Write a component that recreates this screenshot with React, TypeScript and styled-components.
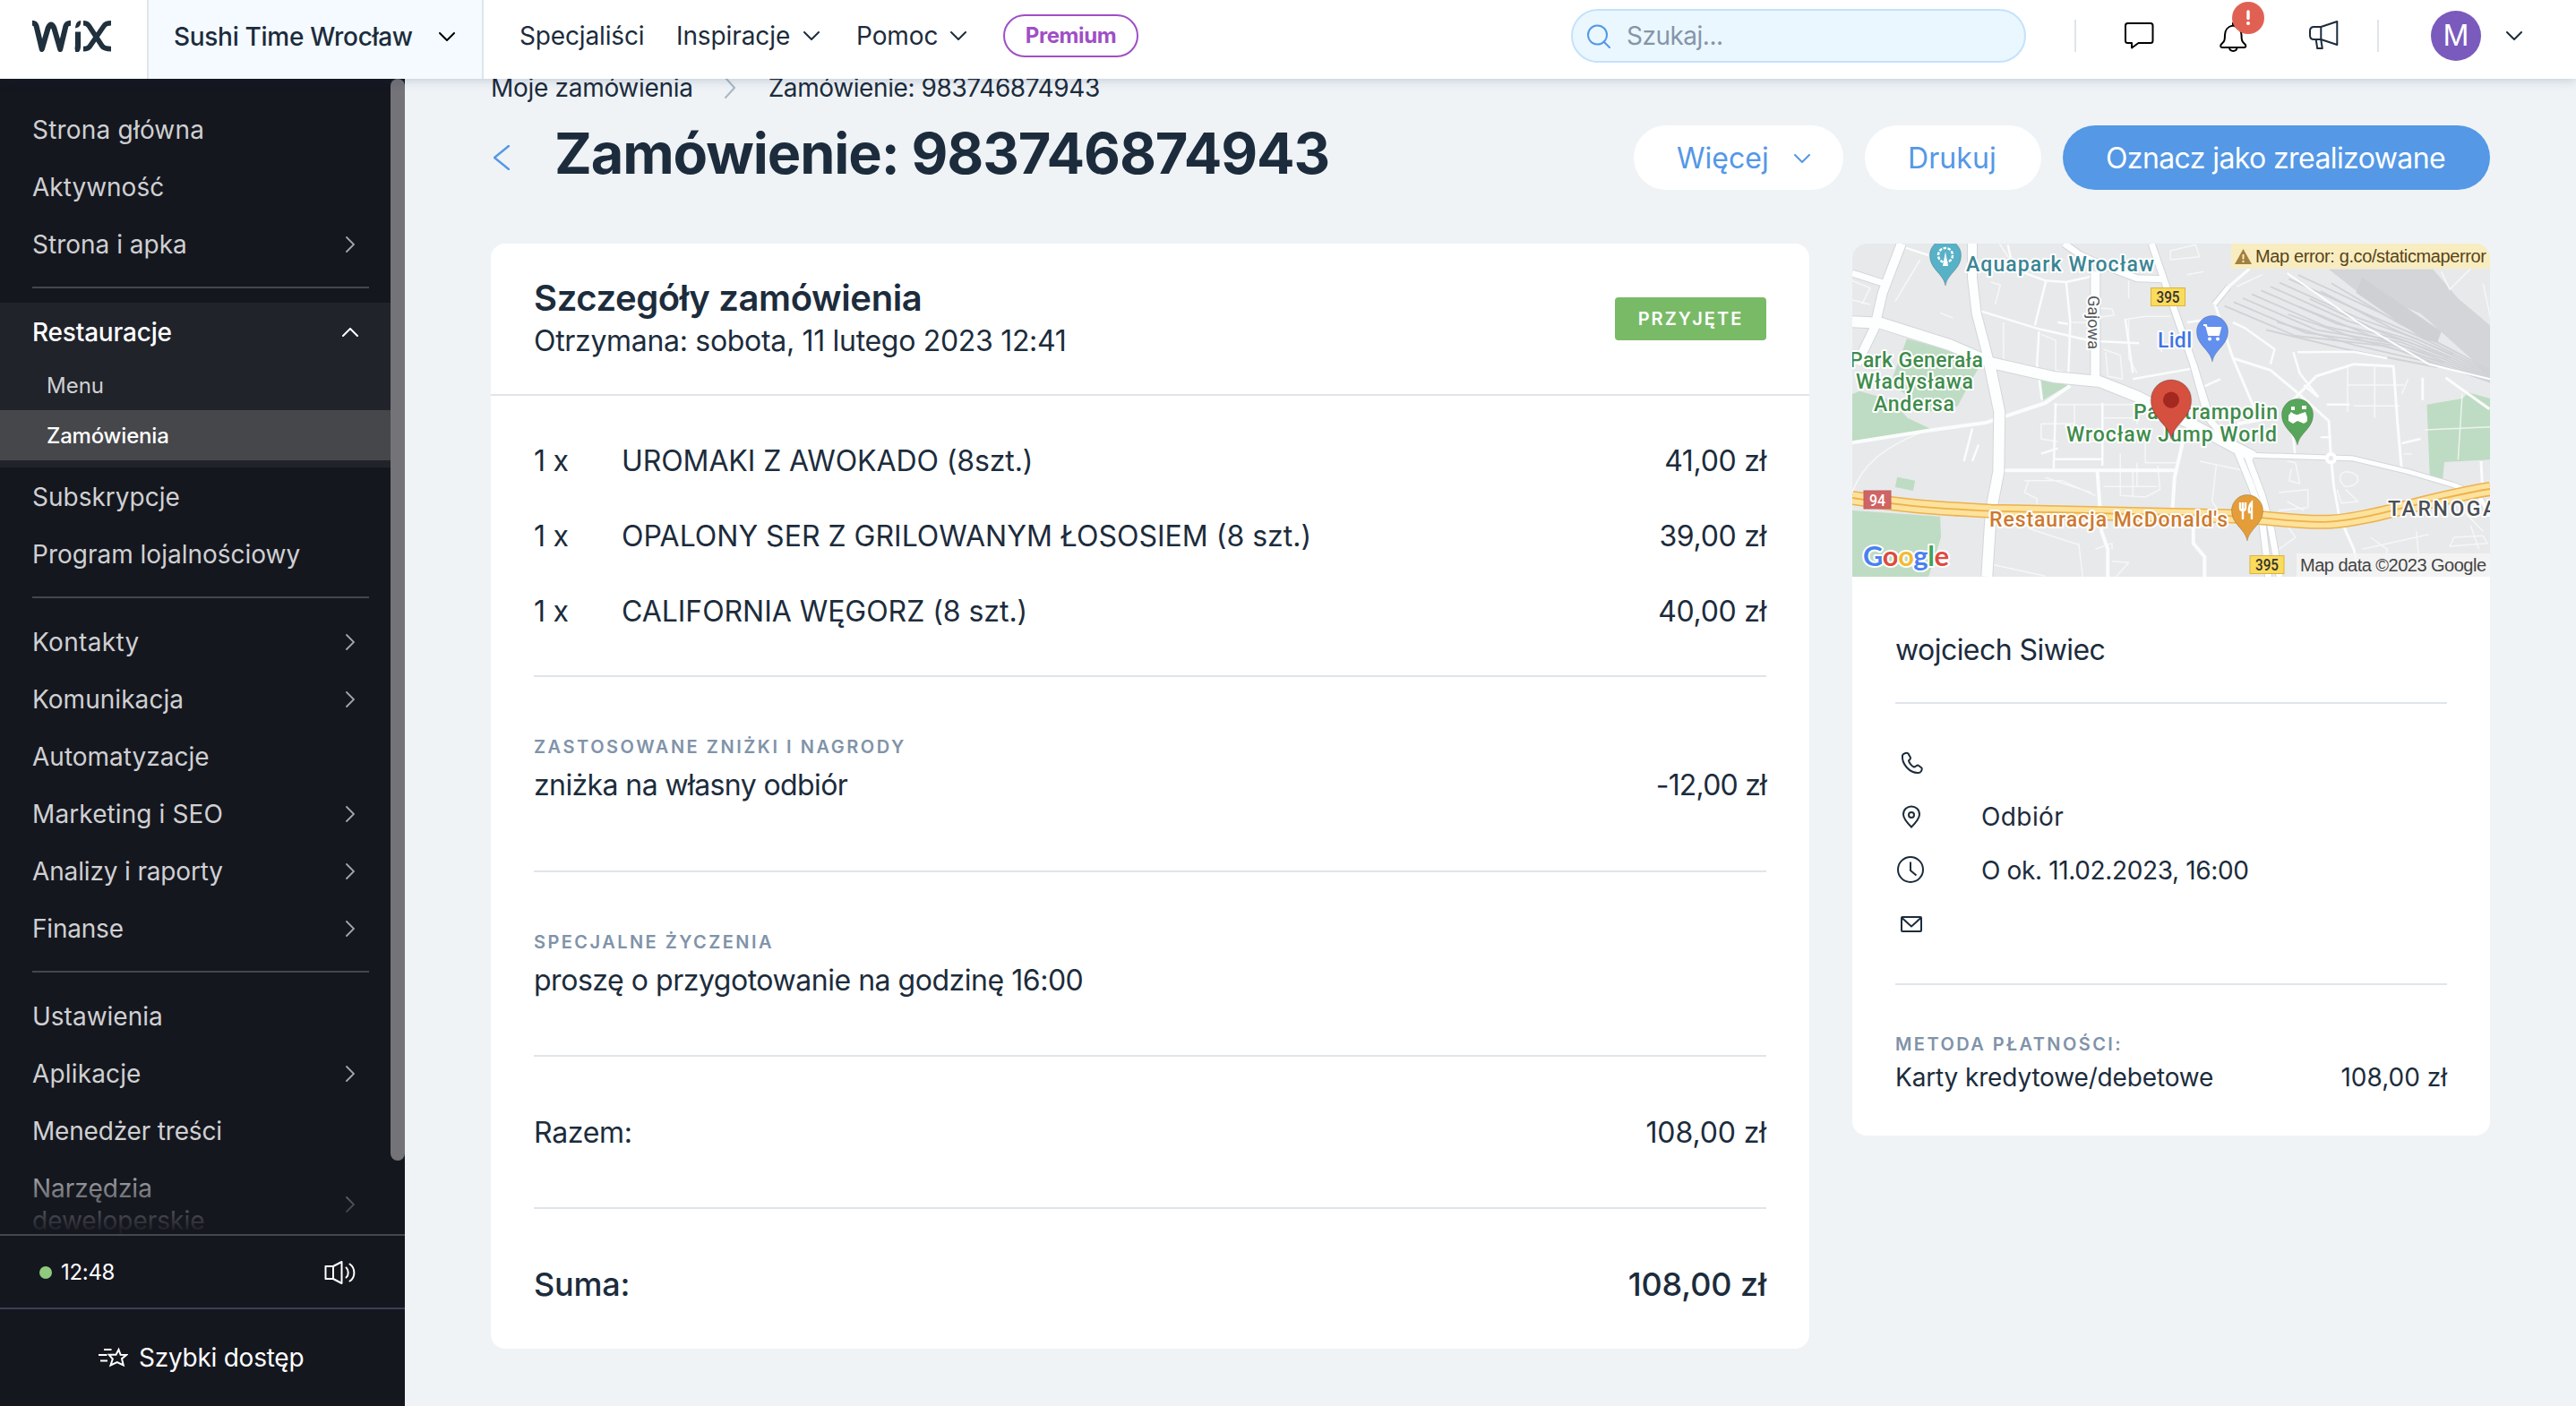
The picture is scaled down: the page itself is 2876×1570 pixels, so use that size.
import React from "react";
import styled, { createGlobalStyle, css } from "styled-components";

const ink = "#1c2c3c";
const line = "#dfe5eb";
const blue = "#5498e6";
const night = "#15171f";

const GlobalStyle = createGlobalStyle`
  *, *::before, *::after { box-sizing: border-box; }
  html, body { margin: 0; padding: 0; }
  body { font-family: Inter, "Liberation Sans", sans-serif; color: ${ink}; background: #eff3f6; overflow: hidden; }
  svg { display: block; flex: none; }
`;

const Page = styled.div`
  display: flex;
  flex-direction: column;
  width: 2876px;
  height: 1570px;
  overflow: hidden;
`;

const Txt = styled.span<{ $size?: number; $weight?: number; $ls?: number; $color?: string; $lh?: number }>`
  display: block;
  white-space: nowrap;
  font-size: ${(p) => p.$size ?? 28}px;
  font-weight: ${(p) => p.$weight ?? 400};
  letter-spacing: ${(p) => p.$ls ?? 0}px;
  line-height: ${(p) => p.$lh ?? 40}px;
  color: ${(p) => p.$color ?? "inherit"};
`;

/* ---------- header ---------- */

const Header = styled.header`
  position: relative;
  z-index: 2;
  display: flex;
  align-items: center;
  flex: none;
  height: 88px;
  background: #fff;
  box-shadow: 0 0 12px rgba(22, 45, 90, 0.25);
`;

const LogoCell = styled.div`
  display: flex;
  align-items: center;
  width: 164px;
  height: 88px;
  padding: 0 0 8px 36px;
`;

const SitePicker = styled.div`
  display: flex;
  align-items: center;
  justify-content: space-between;
  width: 376px;
  height: 88px;
  padding: 0 30px 7px 28px;
  border: solid ${line};
  border-width: 0 2px;
  background: #f4faff;
`;

const TopNav = styled.nav`
  display: flex;
  align-items: center;
  height: 88px;
  padding: 0 0 8px 40px;
`;

const TopLink = styled.div<{ $w: number }>`
  display: flex;
  align-items: center;
  justify-content: space-between;
  width: ${(p) => p.$w}px;
  padding-right: 41px;
`;

const PremiumPill = styled.button`
  display: flex;
  align-items: center;
  justify-content: center;
  width: 151px;
  height: 48px;
  padding: 0;
  border: 2px solid #9f4fc6;
  border-radius: 24px;
  background: #fff;
  font-family: inherit;
`;

const TopRight = styled.div`
  display: flex;
  align-items: center;
  height: 88px;
  margin-left: auto;
  padding: 0 60px 8px 0;
`;

const Search = styled.div`
  display: flex;
  align-items: center;
  gap: 18px;
  width: 508px;
  height: 60px;
  padding-left: 16px;
  border: 2px solid #c4e2fc;
  border-radius: 30px;
  background: #eaf7ff;
`;

const VRule = styled.i<{ $ml: number }>`
  width: 2px;
  height: 36px;
  margin-left: ${(p) => p.$ml}px;
  background: ${line};
`;

const IconSlot = styled.div<{ $ml: number }>`
  position: relative;
  width: 36px;
  height: 36px;
  margin-left: ${(p) => p.$ml}px;
`;

const AlertBadge = styled.span`
  position: absolute;
  top: -20px;
  left: 17px;
  display: flex;
  align-items: center;
  justify-content: center;
  width: 36px;
  height: 36px;
  border-radius: 50%;
  background: #e06154;
`;

const Avatar = styled.div`
  display: flex;
  align-items: center;
  justify-content: center;
  width: 56px;
  height: 56px;
  margin: 0 28px 0 58px;
  border-radius: 50%;
  background: #7a5abc;
`;

/* ---------- sidebar ---------- */

const Body = styled.div`
  display: flex;
  flex: 1;
  min-height: 0;
`;

const Sidebar = styled.aside`
  display: flex;
  flex-direction: column;
  flex: none;
  width: 452px;
  background: ${night};
`;

const NavScroll = styled.div`
  position: relative;
  height: 1290px;
  padding-top: 24px;
  overflow: hidden;
`;

const NavFade = styled.div`
  position: absolute;
  left: 0;
  right: 16px;
  bottom: 0;
  height: 84px;
  background: linear-gradient(rgba(21, 23, 31, 0), rgba(21, 23, 31, 0.96) 96%);
`;

const ScrollThumb = styled.div`
  position: absolute;
  top: 0;
  right: 0;
  width: 16px;
  height: 1208px;
  border-radius: 8px;
  background: #737378;
`;

const NavRow = styled.div<{ $tall?: boolean }>`
  display: flex;
  align-items: center;
  justify-content: space-between;
  height: ${(p) => (p.$tall ? 100 : 64)}px;
  padding: 1px 43px 0 36px;
`;

const NavRule = styled.hr`
  width: 376px;
  height: 2px;
  margin: 16px 0 16px 36px;
  border: 0;
  background: #46474b;
`;

const NavGroup = styled.div`
  padding-bottom: 8px;
  background: #20232a;
`;

const SubRow = styled.div<{ $active?: boolean }>`
  display: flex;
  align-items: center;
  height: 56px;
  padding: 1px 0 0 52px;
  ${(p) =>
    p.$active &&
    css`
      background: #46474b;
    `}
`;

const ArrowSlot = styled.span`
  display: flex;
  align-items: center;
  justify-content: center;
  width: 36px;
  height: 36px;
`;

const ClockBar = styled.div`
  display: flex;
  align-items: center;
  height: 84px;
  padding: 1px 54px 0 44px;
  border: solid #46474b;
  border-width: 2px 0;
  border-bottom-color: #3d3e55;
  color: #fff;
`;

const OnlineDot = styled.i`
  width: 14px;
  height: 14px;
  margin-right: 10px;
  border-radius: 50%;
  background: #8fca7e;
`;

const PushRight = styled.span`
  margin-left: auto;
`;

const QuickAccess = styled.div`
  display: flex;
  align-items: center;
  gap: 12px;
  height: 108px;
  padding-left: 110px;
  color: #fff;
`;

/* ---------- content ---------- */

const Content = styled.main`
  display: flex;
  flex-direction: column;
  flex: 1;
  padding: 0 96px;
`;

const Breadcrumbs = styled.div`
  display: flex;
  align-items: center;
  height: 20px;
`;

const CrumbArrow = styled.span`
  width: 84px;
  padding-left: 35px;
`;

const TitleRow = styled.div`
  display: flex;
  align-items: center;
  height: 72px;
  margin-top: 32px;
  padding-left: 3px;
`;

const TitleBox = styled.div`
  margin-left: 50px;
  padding-bottom: 11px;
`;

const Actions = styled.div`
  display: flex;
  gap: 24px;
  margin-left: auto;
`;

const ActionButton = styled.button<{ $w: number; $primary?: boolean; $pr?: number }>`
  display: flex;
  align-items: center;
  justify-content: space-between;
  width: ${(p) => p.$w}px;
  height: 72px;
  padding: 2px ${(p) => p.$pr ?? 40}px 0 48px;
  border: 0;
  border-radius: 36px;
  font-family: inherit;
  background: ${(p) => (p.$primary ? blue : "#fff")};
  color: ${(p) => (p.$primary ? "#fff" : blue)};
`;

const Columns = styled.div`
  display: flex;
  align-items: flex-start;
  gap: 48px;
  margin-top: 60px;
`;

const Card = styled.section<{ $w: number; $h: number }>`
  width: ${(p) => p.$w}px;
  height: ${(p) => p.$h}px;
  border-radius: 16px;
  background: #fff;
  overflow: hidden;
`;

const CardHead = styled.div`
  display: flex;
  align-items: center;
  justify-content: space-between;
  height: 170px;
  padding: 0 48px;
  border-bottom: 2px solid ${line};
`;

const HeadText = styled.div`
  padding-top: 2px;
`;

const StatusTag = styled.div`
  display: flex;
  align-items: center;
  justify-content: center;
  width: 169px;
  height: 48px;
  border-radius: 4px;
  background: #79ba67;
`;

const Section = styled.div<{ $h: number; $top?: number; $last?: boolean }>`
  height: ${(p) => p.$h}px;
  margin: 0 48px;
  padding-top: ${(p) => p.$top ?? 0}px;
  border-bottom: ${(p) => (p.$last ? "0" : `2px solid ${line}`)};
`;

const ItemRow = styled.div`
  display: grid;
  grid-template-columns: 98px 1fr auto;
  align-items: center;
  height: 84px;
`;

const SplitRow = styled.div<{ $mt?: number }>`
  display: flex;
  align-items: center;
  justify-content: space-between;
  height: 40px;
  margin-top: ${(p) => p.$mt ?? 0}px;
`;

const ContactRow = styled.div`
  display: grid;
  grid-template-columns: 96px 1fr;
  align-items: center;
  height: 60px;
`;

/* ---------- icons ---------- */

const Chevron = ({ dir, size = 18, depth = 10, color = ink, sw = 2 }: { dir: "down" | "up" | "left" | "right"; size?: number; depth?: number; color?: string; sw?: number }) => {
  const s = size;
  const d = depth;
  const vertical = dir === "down" || dir === "up";
  const path = {
    down: `M1 1L${s / 2} ${d - 1}L${s - 1} 1`,
    up: `M1 ${d - 1}L${s / 2} 1L${s - 1} ${d - 1}`,
    left: `M${d - 1} 1L1 ${s / 2}L${d - 1} ${s - 1}`,
    right: `M1 1L${d - 1} ${s / 2}L1 ${s - 1}`,
  }[dir];
  return (
    <svg width={vertical ? s : d} height={vertical ? d : s} fill="none" stroke={color} strokeWidth={sw} strokeLinecap="round">
      <path d={path} />
    </svg>
  );
};

const WixLogo = () => (
  <svg width="90" height="36" viewBox="0 0 90 36" fill="none" stroke="#20303c" strokeWidth="6" strokeLinejoin="round">
    <path d="M0 3.800C3.200 3.800 4 5 4.700 7.600L10.800 33L17.600 9.500Q21 1.500 24.400 9.500L31.200 33L37.300 7.600C38 5 39.200 3.800 43 3.800" />
    <path d="M51 13.500V29Q51 34 48 34.500" strokeWidth="6.200" strokeLinejoin="miter" />
    <path d="M48 9.500C48.400 4.500 50 1.500 54.200 1C54.400 6 53 8.500 48 9.500Z" fill="#20303c" stroke="none" />
    <path d="M57 3.800C60.600 3.800 62 4.800 63.400 7L78 29.400C79.400 31.500 82.500 32.600 88 32.600M88 3.800C82.800 3.800 81.400 4.800 80 7L64.200 29.800C62.700 32 61 32.600 57 32.600" strokeWidth="5.600" />
  </svg>
);

const SearchIcon = () => (
  <svg width="26" height="27" viewBox="0 0 26 27" fill="none" stroke={blue} strokeWidth="2" strokeLinecap="round">
    <circle cx="11.500" cy="12" r="10.500" />
    <path d="M18.500 19.500L25 26" />
  </svg>
);

const ChatIcon = () => (
  <svg width="36" height="36" viewBox="0 0 36 36" fill="none" stroke="#000" strokeWidth="2" strokeLinejoin="round">
    <path d="M5.500 4H31Q33.500 4 33.500 6.500V23.500Q33.500 26 31 26H17.500L10 31.500V26H5.500Q3 26 3 23.500V6.500Q3 4 5.500 4Z" />
  </svg>
);

const BellIcon = () => (
  <svg width="36" height="38" viewBox="0 0 36 38" fill="none" stroke="#000" strokeWidth="2" strokeLinejoin="round">
    <path d="M18 3V6.500C12 7.500 9 12 9 17C9 24 8 24.500 5.800 26.500C3.500 28.500 3.800 31 5.800 31H30.500C32.800 31 33 28.500 30.600 26.500C28.500 24.500 27.500 24 27.500 17C27.500 12 24 7.500 18 6.500" />
    <path d="M14 31.500C14.500 36 22 36 22.500 31.500" />
  </svg>
);

const MegaphoneIcon = () => (
  <svg width="36" height="36" viewBox="0 0 36 36" fill="none" stroke={ink} strokeWidth="2" strokeLinejoin="round">
    <path d="M15.300 8H7.500Q3 8 3 12.500V17.500Q3 22 7.500 22H15.300ZM15.300 8L33.300 2V28L15.300 22M9.700 22L11.200 32H16.800L15.200 22" />
  </svg>
);

const SpeakerIcon = () => (
  <svg width="36" height="28" viewBox="0 0 36 28" fill="none" stroke="#fff" strokeWidth="2" strokeLinejoin="round" strokeLinecap="round">
    <path d="M10 7L19.500 2V26L10 21H1.500V7ZM10 7V21" />
    <path d="M24.500 8.500C27.500 11 27.500 17 24.500 19.500M28.500 4.500C35 9 35 19.500 28.500 23.500" />
  </svg>
);

const FastStarIcon = () => (
  <svg width="33" height="24" viewBox="0 0 33 24" fill="none" stroke="#fff" strokeWidth="2" strokeLinejoin="miter">
    <path d="M22.500 3L24.600 8.800L31 9L26 13.200L27.800 20.500L20.800 17L13.500 20.500L15.800 13.500L11.800 8.800H19.500Z" />
    <path d="M6 3H14.500M0 9H9.500M2 15.500H10" />
  </svg>
);

const PhoneIcon = () => (
  <svg width="36" height="36" viewBox="0 0 36 36" fill="none" stroke={ink} strokeWidth="2" strokeLinejoin="round">
    <path d="M8 9.500C7 19 16 29.500 26 29C28.500 28.800 30.500 25.500 29.500 23.500L25.500 20.500C24 20 22.500 22.500 21 22.500C18.500 21.500 15.500 18 15 15.500C15.500 14.500 17.500 13.500 17 12L14.500 7.500C12.500 6 8.500 7.500 8 9.500Z" />
  </svg>
);

const PinIcon = () => (
  <svg width="36" height="36" viewBox="0 0 36 36" fill="none" stroke={ink} strokeWidth="2">
    <path d="M18 29.500C13 24.500 9 20 9 15.500C9 3.500 27 3.500 27 15.500C27 20 23 24.500 18 29.500Z" />
    <circle cx="18" cy="16" r="3" />
  </svg>
);

const ClockIcon = () => (
  <svg width="36" height="36" viewBox="0 0 36 36" fill="none" stroke={ink} strokeWidth="2">
    <circle cx="17" cy="17" r="14" />
    <path d="M17 8.500V18L23.500 23.500" />
  </svg>
);

const MailIcon = () => (
  <svg width="36" height="36" viewBox="0 0 36 36" fill="none" stroke={ink} strokeWidth="2" strokeLinejoin="round">
    <rect x="7" y="10" width="22" height="16" rx="1" />
    <path d="M7.500 11L18 20.500L28.500 11" />
  </svg>
);

/* ---------- map ---------- */

const MapSvg = styled.svg`
  width: 712px;
  height: 372px;
  background: #e8e9eb;

  .halo {
    font-family: Roboto, sans-serif;
    font-size: 23px;
    font-weight: 500;
    paint-order: stroke;
    stroke: #fff;
    stroke-width: 4px;
    stroke-linejoin: round;
  }
  .light {
    font-weight: 400;
  }
  .shield {
    font-family: Roboto, sans-serif;
    font-size: 18px;
    font-weight: 500;
  }
  .note {
    font-family: "Liberation Sans", Arial, sans-serif;
    font-size: 20px;
  }
`;

type Road = [width: number, d: string];

const thinRoads: Road[] = [
  [1.5, "M370 36L400 100M350 165L372 175L360 240M228 268L258 285M230 370L262 385M120 230L180 90M17 225L60 240M17 160L60 185L40 240"],
  [1.5, "M380 300V440L460 455M470 340L505 360V460L535 470M620 390L660 410L665 490L630 480L625 400M545 300H590M590 250L640 255L645 275L600 285"],
  [1.5, "M500 575H700M550 575V700H620M470 640H550M470 640V690L510 700M700 580V640M720 700V770H800M770 700H810M620 620H690"],
  [1.5, "M430 830H520L600 880M440 830L430 870L460 890V910M480 820L590 870M660 740V880L720 885L755 860L750 780M700 770V850M620 850H750M690 800V885"],
  [1.5, "M17 870C40 780 90 720 180 670M350 1110L480 1150M560 1040L570 1152M440 990L560 1045M600 1060L640 1040V1060M640 1100L680 1105L650 1152"],
  [1.5, "M850 765L970 800M890 780L880 900L905 950M1070 790L1065 830L1090 840L1080 770L1060 765M1040 870L1110 860V920L1040 930M1060 900L1100 930"],
  [1.5, "M1200 800C1240 800 1240 850 1200 850C1180 830 1185 805 1200 800M1200 860L1230 900L1190 905L1180 860M1060 980L1080 1020L1040 1060L1030 1140"],
  [1.5, "M1260 1020L1300 1060L1290 1152M1370 1000L1380 1152M1460 1020L1530 1015L1540 1040L1450 1050L1460 1020M1240 1060L1400 1010M1500 980L1520 1060"],
  [1.5, "M1205 450V600M1270 450V620M1205 510H1340M1220 580H1330M1390 660L1547 650M1480 540L1470 760M1350 490L1335 540M1340 740L1360 740M1440 870L1530 1000"],
  [1.5, "M780 60L840 40L850 80L780 90ZM670 290L720 280H780M680 290V420L700 470M750 370L760 400M680 160V220M820 140L860 130M940 180L1000 140M1430 130L1450 190L1500 120M1530 170L1547 280"],
  [2.5, "M145 50L200 75M375 105L480 160L530 165L595 145M390 40L400 100M320 260L460 320L590 362L705 370M455 310L482 160M530 165L540 300L535 490M465 330L460 440L472 560M510 300L535 305"],
  [2.5, "M690 490L830 455M690 470L672 290M860 515L900 490M820 300L870 290M930 300L960 320L1030 390L1020 440M1075 400L1090 470L1135 550M1085 400L1220 398L1300 420"],
  [2.5, "M470 740L510 722M285 765L305 655M305 765L320 710M500 758H618M505 570L500 790M617 570V780M1155 575H1210M1140 685H1165M1335 705L1380 690M1080 755L1075 690L1060 600"],
  [3, "M970 120L920 180L887 240L930 420L985 600M930 420L1020 460L1080 530L1160 630L1165 750L1172 850L1185 950L1220 1060L1235 1152"],
  [3, "M1060 580L1130 480L1220 440L1315 447L1325 640L1335 800M1440 485L1545 590M1100 510L1135 550M1385 485V560M1525 765L1530 900"],
  [4, "M17 703L200 662L340 635L480 570L540 512M380 796H790M810 700L790 820L785 930M605 800L615 1000L630 1060V1152M835 980V1040L862 1085V1152M940 640L1000 625"],
];

const mainRoads: Road[] = [
  [5, "M975 745L1215 755L1350 800L1460 845L1520 880L1547 950M885 240L920 180"],
  [7, "M17 135L95 170M525 36L565 75L620 110L700 152L765 155M735 36L790 260L835 440L880 640"],
  [10, "M600 130V490M135 36L90 200L70 320L28 440M305 36V150L315 270L345 430"],
  [12, "M345 430L370 600L368 800L350 930L340 1152M17 298L85 302L250 375L350 435L500 483L610 498L700 548L850 655L930 715L980 750"],
  [7, "M835 440L870 620L940 730L975 850L998 940L1010 1080L1015 1152M965 750L1000 880L1020 980L1042 1152"],
];

const highway = "M17 888C120 912 200 922 350 932C560 936 760 944 960 950C1040 958 1090 972 1160 968C1260 962 1400 890 1547 858";

const MapPin = ({ x, y, color, scale = 1, children }: { x: number; y: number; color: string; scale?: number; children?: React.ReactNode }) => (
  <g transform={`translate(${x} ${y}) scale(${scale})`}>
    <path d="M0 0C-2.500-14-17.500-18-17.500-34A17.500 17.500 0 0 1 17.500-34C17.500-18 2.500-14 0 0Z" fill={color} stroke="rgba(0,0,0,.18)" />
    <g transform="translate(0 -34)">{children}</g>
  </g>
);

const Shield = ({ x, y, w, text, red }: { x: number; y: number; w: number; text: string; red?: boolean }) => (
  <g>
    <rect x={x} y={y} width={w} height="20" fill={red ? "#d06464" : "#fbdb5c"} stroke={red ? "#c05c5c" : "#d8b63c"} />
    <text className="shield" x={x + w / 2} y={y + 16.5} textAnchor="middle" fill={red ? "#fff" : "#333"} textLength={w - 12} lengthAdjust="spacingAndGlyphs">
      {text}
    </text>
  </g>
);

const StaticMap = () => (
  <MapSvg viewBox="0 0 712 372">
    <g transform="translate(-8 -12) scale(.46556 .33333)" fill="none" strokeLinejoin="round">
      <g fill="#bedcc3">
        <path d="M148 355L240 390L330 430L300 500L270 580L200 600L160 560L110 500ZM35 530L110 560L150 620L210 660L17 697V540Z" />
        <path d="M470 490L535 510L475 560ZM17 930L228 950L230 1020L200 1152H17ZM125 818L168 830L163 864L120 852Z" />
        <path d="M1395 575L1480 555L1495 535L1547 555V760L1437 768L1433 825L1402 815Z" />
      </g>
      <path d="M1160 122H1410L1470 220L1547 310V490L1500 420L1380 270L1300 225L1240 210Z" fill="#d4d5d8" />
      <g stroke="#d0d2d5" strokeWidth="1.800">
        {Array.from({ length: 9 }, (_, i) => (
          <path key={i} vectorEffect="non-scaling-stroke" d={`M${910 + i * 22} ${245 - i * 13}L${1080 + i * 25} ${345 - i * 10}L${1300 + i * 12} ${380 - i * 4}L1547 ${500 - i * 5}`} />
        ))}
        {Array.from({ length: 7 }, (_, i) => (
          <path key={i} vectorEffect="non-scaling-stroke" d={`M${1010 + i * 26} ${325 - i * 26}L${1200 + i * 22} ${390 - i * 14}L${1420 + i * 8} ${450 - i * 8}`} />
        ))}
      </g>
      <path d="M1240 150L1430 330L1420 368L1385 355L1225 200Z" fill="#cfd0d4" />
      <path d="M1060 135L1230 300L1400 440L1547 490" stroke="#fff" strokeWidth="2" vectorEffect="non-scaling-stroke" />
      {thinRoads.map(([w, d]) => (
        <path key={d} d={d} stroke="#fbfcfc" strokeWidth={w} opacity={w < 2 ? 0.75 : 1} vectorEffect="non-scaling-stroke" />
      ))}
      {mainRoads.map(([w, d]) => (
        <path key={d} d={d} stroke="#d3d6da" strokeWidth={w + 2} vectorEffect="non-scaling-stroke" />
      ))}
      {mainRoads.map(([w, d]) => (
        <path key={d} d={d} stroke="#fdfefe" strokeWidth={w} vectorEffect="non-scaling-stroke" />
      ))}
      <ellipse cx="1165" cy="755" rx="10" ry="14" fill="#e8e9eb" stroke="#fff" strokeWidth="4" vectorEffect="non-scaling-stroke" />
      <path d={highway} stroke="#edb14a" strokeWidth="16" vectorEffect="non-scaling-stroke" />
      <path d={highway} stroke="#fce29c" strokeWidth="13" vectorEffect="non-scaling-stroke" />
      <path d={highway} stroke="#edb14a" strokeWidth="1.800" vectorEffect="non-scaling-stroke" />
    </g>

    <MapPin x={104} y={47} color="#57b1c7">
      <circle r="8" fill="none" stroke="#fff" strokeWidth="2.500" strokeDasharray="3.500 1.500" />
      <path d="M0-4L3 12H-3Z" fill="#fff" />
    </MapPin>
    <text className="halo" x="127" y="30.500" textLength="210" fill="#3a8594">Aquapark Wrocław</text>
    <text className="halo light" transform="translate(262.500 58) rotate(90)" textLength="60" fill="#55595e" style={{ fontSize: 18.5 }}>Gajowa</text>
    <Shield x={333.5} y={49.5} w={38} text="395" />
    <text className="halo" x="341" y="116" textLength="38" fill="#4174e4">Lidl</text>
    <MapPin x={402} y={132} color="#6390ee">
      <path d="M-10-7H-7L-4 4H7L9-4H-6" fill="#fff" stroke="#fff" strokeWidth="2" />
      <circle cx="-3" cy="8.500" r="2" fill="#fff" />
      <circle cx="6" cy="8.500" r="2" fill="#fff" />
    </MapPin>
    <text className="halo" x="-3" y="137.500" textLength="149" fill="#3f8c4c">Park Generała</text>
    <text className="halo" x="4" y="162" textLength="131" fill="#3f8c4c">Władysława</text>
    <text className="halo" x="24" y="187" textLength="90" fill="#3f8c4c">Andersa</text>
    <text className="halo" x="314" y="196" textLength="161" fill="#3f8c4c">Park trampolin</text>
    <text className="halo" x="239" y="221" textLength="235" fill="#3f8c4c">Wrocław Jump World</text>
    <MapPin x={497} y={225} color="#57a65b">
      <path d="M-10 7V1L-7-3Q-2 2 3-1L9-3L11 3V7Q8 11 5 9L0 7L-5 10ZM-7-9H-3V-5H-7ZM5-10H10V-6H5Z" fill="#fff" />
    </MapPin>
    <MapPin x={356} y={218.5} color="#d6503f" scale={1.29}>
      <circle r="7" fill="#a3281f" />
    </MapPin>
    <text className="halo" x="153" y="316" textLength="266" fill="#cd792f">Restauracja McDonald's</text>
    <MapPin x={441} y={332} color="#e49d38">
      <path d="M-8-9V-3Q-8 0-5 0V10M-5-9V0M-2-9V-3Q-2 0-5 0M5 10V-9Q1-5 2 2H5" fill="none" stroke="#fff" strokeWidth="2.400" />
    </MapPin>
    <Shield x={13} y={276} w={30} text="94" red />
    <Shield x={444} y={348.5} w={38} text="395" />
    <text className="halo" x="598" y="304" fill="#4b4f55" letterSpacing="2.6">TARNOGA</text>

    <rect x="423" width="289" height="28" fill="#f8edc1" />
    <path d="M436.500 6L446 23H427Z" fill="#a3803f" />
    <path d="M436.500 12V17.500M436.500 19V21" stroke="#f8edc1" strokeWidth="2" />
    <text className="note" x="450" y="21" textLength="258" fill="#594417">Map error: g.co/staticmaperror</text>

    <rect x="496" y="346" width="216" height="26" fill="#f5f5f5" fillOpacity=".85" />
    <text className="note" x="500" y="366" textLength="208" fill="#444">Map data ©2023 Google</text>

    <text className="halo" x="12" y="360" textLength="96" style={{ fontFamily: "Lato", fontSize: 31, fontWeight: 700 }}>
      <tspan fill="#4a80ee">G</tspan>
      <tspan fill="#dd4b3e">o</tspan>
      <tspan fill="#f2bb33">o</tspan>
      <tspan fill="#4a80ee">g</tspan>
      <tspan fill="#41a35a">l</tspan>
      <tspan fill="#dd4b3e">e</tspan>
    </text>
  </MapSvg>
);

/* ---------- data ---------- */

type NavEntry = { label: string; arrow?: boolean; ls?: number };

const navTop: NavEntry[] = [
  { label: "Strona główna", ls: 0.2 },
  { label: "Aktywność" },
  { label: "Strona i apka", arrow: true },
];
const navPlans: NavEntry[] = [{ label: "Subskrypcje" }, { label: "Program lojalnościowy" }];
const navMiddle: NavEntry[] = [
  { label: "Kontakty", arrow: true, ls: 0.35 },
  { label: "Komunikacja", arrow: true, ls: 0.05 },
  { label: "Automatyzacje" },
  { label: "Marketing i SEO", arrow: true, ls: 0.1 },
  { label: "Analizy i raporty", arrow: true, ls: -0.15 },
  { label: "Finanse", arrow: true, ls: -0.2 },
];
const navBottom: NavEntry[] = [
  { label: "Ustawienia" },
  { label: "Aplikacje", arrow: true, ls: 0.15 },
  { label: "Menedżer treści", ls: -0.18 },
];

const items = [
  { name: "UROMAKI Z AWOKADO (8szt.)", price: "41,00 zł", ls: -0.1 },
  { name: "OPALONY SER Z GRILOWANYM ŁOSOSIEM (8 szt.)", price: "39,00 zł", ls: 0 },
  { name: "CALIFORNIA WĘGORZ (8 szt.)", price: "40,00 zł", ls: -0.05 },
];

const grey = "#cfd0d2";

const NavList = ({ entries }: { entries: NavEntry[] }) => (
  <>
    {entries.map((e) => (
      <NavRow key={e.label}>
        <Txt $ls={e.ls} $color={grey}>{e.label}</Txt>
        {e.arrow && (
          <ArrowSlot>
            <Chevron dir="right" size={18} depth={10} color="#a5a6aa" sw={1.8} />
          </ArrowSlot>
        )}
      </NavRow>
    ))}
  </>
);

export default function App() {
  return (
    <Page>
      <GlobalStyle />
      <Header>
        <LogoCell>
          <WixLogo />
        </LogoCell>
        <SitePicker>
          <Txt $weight={500} $ls={-0.3}>Sushi Time Wrocław</Txt>
          <Chevron dir="down" color="#000" />
        </SitePicker>
        <TopNav>
          <TopLink $w={175}><Txt $ls={-0.15}>Specjaliści</Txt></TopLink>
          <TopLink $w={201}><Txt $ls={-0.1}>Inspiracje</Txt><Chevron dir="down" /></TopLink>
          <TopLink $w={164}><Txt $ls={-0.1}>Pomoc</Txt><Chevron dir="down" /></TopLink>
          <PremiumPill><Txt $size={24} $weight={700} $ls={-0.4} $color="#9f4fc6">Premium</Txt></PremiumPill>
        </TopNav>
        <TopRight>
          <Search>
            <SearchIcon />
            <Txt $ls={-0.5} $color="#8595a8">Szukaj...</Txt>
          </Search>
          <VRule $ml={54} />
          <IconSlot $ml={52}><ChatIcon /></IconSlot>
          <IconSlot $ml={69}>
            <BellIcon />
            <AlertBadge>
              <svg width="6" height="18" viewBox="0 0 6 18"><path d="M3 2V9.500" stroke="#fff" strokeWidth="3.400" strokeLinecap="round" /><circle cx="3" cy="15" r="2" fill="#fff" /></svg>
            </AlertBadge>
          </IconSlot>
          <IconSlot $ml={65}><MegaphoneIcon /></IconSlot>
          <VRule $ml={42} />
          <Avatar><Txt $size={32} $color="#fff">M</Txt></Avatar>
          <Chevron dir="down" />
        </TopRight>
      </Header>

      <Body>
        <Sidebar>
          <NavScroll>
            <NavList entries={navTop} />
            <NavRule />
            <NavGroup>
              <NavRow>
                <Txt $weight={500} $ls={-0.2} $color="#fff">Restauracje</Txt>
                <ArrowSlot><Chevron dir="up" color="#fff" /></ArrowSlot>
              </NavRow>
              <SubRow><Txt $size={24} $color={grey}>Menu</Txt></SubRow>
              <SubRow $active><Txt $size={24} $weight={500} $ls={-0.2} $color="#fff">Zamówienia</Txt></SubRow>
            </NavGroup>
            <NavList entries={navPlans} />
            <NavRule />
            <NavList entries={navMiddle} />
            <NavRule />
            <NavList entries={navBottom} />
            <NavRow $tall>
              <Txt $lh={36} $color={grey}>Narzędzia<br />deweloperskie</Txt>
              <ArrowSlot><Chevron dir="right" size={18} depth={10} color="#a5a6aa" sw={1.8} /></ArrowSlot>
            </NavRow>
            <NavFade />
            <ScrollThumb />
          </NavScroll>
          <ClockBar>
            <OnlineDot />
            <Txt $size={24} $ls={-0.3}>12:48</Txt>
            <PushRight><SpeakerIcon /></PushRight>
          </ClockBar>
          <QuickAccess>
            <FastStarIcon />
            <Txt $ls={-0.25}>Szybki dostęp</Txt>
          </QuickAccess>
        </Sidebar>

        <Content>
          <Breadcrumbs>
            <Txt $lh={20} $ls={-0.3}>Moje zamówienia</Txt>
            <CrumbArrow><Chevron dir="right" size={24} depth={12} color="#a9b8c6" /></CrumbArrow>
            <Txt $lh={20} $ls={-0.4}>Zamówienie: 983746874943</Txt>
          </Breadcrumbs>
          <TitleRow>
            <Chevron dir="left" size={28} depth={18} color={blue} sw={2.4} />
            <TitleBox><Txt $size={63} $weight={700} $ls={-1.1} $lh={60}>Zamówienie: 983746874943</Txt></TitleBox>
            <Actions>
              <ActionButton $w={234} $pr={37}><Txt $size={32}>Więcej</Txt><Chevron dir="down" color={blue} /></ActionButton>
              <ActionButton $w={197}><Txt $size={32} $ls={0.1}>Drukuj</Txt></ActionButton>
              <ActionButton $w={477} $primary><Txt $size={32} $ls={-0.6}>Oznacz jako zrealizowane</Txt></ActionButton>
            </Actions>
          </TitleRow>

          <Columns>
            <Card $w={1472} $h={1234}>
              <CardHead>
                <HeadText>
                  <Txt $size={40} $weight={600} $ls={-0.37} $lh={48}>Szczegóły zamówienia</Txt>
                  <Txt $size={32} $ls={-0.31} $lh={48}>Otrzymana: sobota, 11 lutego 2023 12:41</Txt>
                </HeadText>
                <StatusTag><Txt $size={20} $weight={600} $ls={2} $color="#fff">PRZYJĘTE</Txt></StatusTag>
              </CardHead>
              <Section $h={314} $top={31}>
                {items.map((it) => (
                  <ItemRow key={it.name}>
                    <Txt $size={32} $ls={-0.3}>1 x</Txt>
                    <Txt $size={32} $ls={it.ls}>{it.name}</Txt>
                    <Txt $size={32} $ls={-0.3}>{it.price}</Txt>
                  </ItemRow>
                ))}
              </Section>
              <Section $h={218} $top={66}>
                <Txt $size={20} $weight={600} $ls={2.54} $lh={24} $color="#8093a9">ZASTOSOWANE ZNIŻKI I NAGRODY</Txt>
                <SplitRow $mt={11}><Txt $size={32} $ls={-0.6}>zniżka na własny odbiór</Txt><Txt $size={32} $ls={-0.8}>-12,00 zł</Txt></SplitRow>
              </Section>
              <Section $h={206} $top={66}>
                <Txt $size={20} $weight={600} $ls={2.45} $lh={24} $color="#8093a9">SPECJALNE ŻYCZENIA</Txt>
                <SplitRow $mt={11}><Txt $size={32} $ls={-0.47}>proszę o przygotowanie na godzinę 16:00</Txt></SplitRow>
              </Section>
              <Section $h={170} $top={65}>
                <SplitRow><Txt $size={32} $ls={-0.3}>Razem:</Txt><Txt $size={32} $ls={-0.1}>108,00 zł</Txt></SplitRow>
              </Section>
              <Section $h={156} $top={64} $last>
                <SplitRow><Txt $size={36} $weight={500} $ls={-0.2}>Suma:</Txt><Txt $size={36} $weight={500} $ls={-0.1}>108,00 zł</Txt></SplitRow>
              </Section>
            </Card>

            <Card $w={712} $h={996}>
              <StaticMap />
              <Section $h={142} $top={62}><Txt $size={32} $ls={-0.55}>wojciech Siwiec</Txt></Section>
              <Section $h={314} $top={36}>
                <ContactRow><PhoneIcon /></ContactRow>
                <ContactRow><PinIcon /><Txt $ls={0.4}>Odbiór</Txt></ContactRow>
                <ContactRow><ClockIcon /><Txt $ls={-0.36}>O ok. 11.02.2023, 16:00</Txt></ContactRow>
                <ContactRow><MailIcon /></ContactRow>
              </Section>
              <Section $h={168} $top={54} $last>
                <Txt $size={20} $weight={600} $ls={2.42} $lh={24} $color="#8093a9">METODA PŁATNOŚCI:</Txt>
                <SplitRow $mt={5}><Txt $ls={-0.15}>Karty kredytowe/debetowe</Txt><Txt>108,00 zł</Txt></SplitRow>
              </Section>
            </Card>
          </Columns>
        </Content>
      </Body>
    </Page>
  );
}
